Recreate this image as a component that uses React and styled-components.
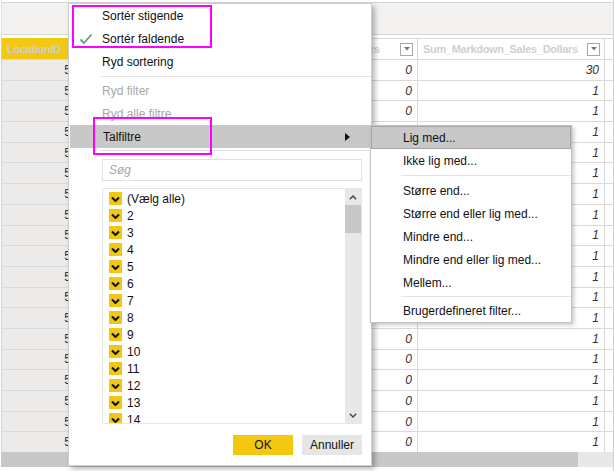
import styled, { createGlobalStyle } from "styled-components";

const GlobalStyle = createGlobalStyle`
  html, body {
    margin: 0;
    padding: 0;
    background: #fff;
  }
  body {
    font-family: "Liberation Sans", Arial, sans-serif;
    color: #000;
  }
`;

const YELLOW = "#f2c811";
const LINE = "#d9d9d9";

// table data --------------------------
const columns = [
  { key: "loc", title: "LocationID", width: "70px" },
  { key: "gm", title: "Sum_GrossMargin_Amount", width: "161px" },
  { key: "reg", title: "Sum_Regular_Sales_Dollars", width: "185px" },
  { key: "mark", title: "Sum_Markdown_Sales_Dollars", width: "187px" },
  { key: "s", title: "Sum_Sales", width: "1fr" },
];

const rows = Array.from({ length: 20 }, (_, i) => ({
  loc: "5",
  gm: "0",
  reg: "0",
  mark: i === 0 ? "30" : "1",
  s: "",
}));

const sortItems = ["Sortér stigende", "Sortér faldende", "Ryd sortering"];
const numberFilters = [
  ["Lig med...", "Ikke lig med..."],
  ["Større end...", "Større end eller lig med...", "Mindre end...", "Mindre end eller lig med...", "Mellem..."],
  ["Brugerdefineret filter..."],
];
const values = ["(Vælg alle)", "2", "3", "4", "5", "6", "7", "8", "9", "10", "11", "12", "13", "14"];

const App = () => {
  return (
    <>
      <GlobalStyle />
      <Frame>
        <TopBar>
          <TopBand />
        </TopBar>

        <TableArea>
          <Grid $cols={columns.map((c) => c.width).join(" ")}>
            {columns.map((col) => (
              <HeaderCell key={col.key} $loc={col.key === "loc"}>
                <HeaderText>{col.title}</HeaderText>
                {col.key !== "loc" && col.key !== "s" && (
                  <DropButton>
                    <svg width="6" height="4" viewBox="0 0 6 4">
                      <path d="M0 0 L6 0 L3 3.5 Z" fill="#777" />
                    </svg>
                  </DropButton>
                )}
              </HeaderCell>
            ))}
            {rows.map((row, i) =>
              columns.map((col) => (
                <Cell key={`${i}-${col.key}`} $loc={col.key === "loc"}>
                  {row[col.key]}
                </Cell>
              ))
            )}
          </Grid>
        </TableArea>

        <HScroll>
          <HThumb />
        </HScroll>

        {/* Filter dropdown ------------------------ */}
        <Menu>
          {sortItems.map((label, i) => (
            <MenuItem key={label}>
              {i === 1 && (
                <CheckMark viewBox="0 0 14 12" width="14" height="12">
                  <path d="M1.5 6.5 L5 10 L12.5 1.5" fill="none" stroke="#5c9c8a" strokeWidth="1.8" />
                </CheckMark>
              )}
              {label}
            </MenuItem>
          ))}
          <Separator />
          <MenuItem $disabled>Ryd filter</MenuItem>
          <MenuItem $disabled>Ryd alle filtre</MenuItem>
          <MenuItem $active>
            Talfiltre
            <SubArrow viewBox="0 0 5 8" width="5" height="8">
              <path d="M0 0 L5 4 L0 8 Z" fill="#111" />
            </SubArrow>
            <SubMenu>
              {numberFilters.map((group, gi) => (
                <SubGroup key={gi}>
                  {gi > 0 && <SubSeparator $tight={gi === 2} />}
                  {group.map((label) => (
                    <SubItem key={label} $active={label === "Lig med..."}>
                      {label}
                    </SubItem>
                  ))}
                </SubGroup>
              ))}
            </SubMenu>
          </MenuItem>
          <Separator $after />

          <Search>Søg</Search>

          <CheckList>
            <CheckItems>
              {values.map((v) => (
                <CheckRow key={v}>
                  <Box>
                    <svg width="9" height="7" viewBox="0 0 9 7">
                      <path d="M1 2.5 L4.5 6 L8 2.5" fill="none" stroke="#111" strokeWidth="2" />
                    </svg>
                  </Box>
                  {v}
                </CheckRow>
              ))}
            </CheckItems>
            <VScroll>
              <Chevron viewBox="0 0 8 5" width="8" height="5">
                <path d="M0.8 4.2 L4 1 L7.2 4.2" fill="none" stroke="#444" strokeWidth="1.4" />
              </Chevron>
              <VThumb />
              <VSpacer />
              <Chevron viewBox="0 0 8 5" width="8" height="5">
                <path d="M0.8 0.8 L4 4 L7.2 0.8" fill="none" stroke="#444" strokeWidth="1.4" />
              </Chevron>
            </VScroll>
          </CheckList>

          <ButtonRow>
            <Button $primary>OK</Button>
            <Button>Annuller</Button>
          </ButtonRow>
        </Menu>

        {/* annotation boxes */}
        <Mark $x={72} $y={5} $w={140} $h={43} />
        <Mark $x={93} $y={117} $w={119} $h={38} />
      </Frame>
    </>
  );
};

export default App;

// styles ------------------------------

const Frame = styled.div`
  position: relative;
  width: 614px;
  height: 471px;
  overflow: hidden;
  box-sizing: border-box;
  padding-left: 1px;
  border-right: 1px solid #d0d0d0;
  display: flex;
  flex-direction: column;
`;

const TopBar = styled.div`
  height: 38px;
  box-sizing: border-box;
  padding-top: 2px;
  border-left: 1px solid #e0e0e0;
`;

const TopBand = styled.div`
  height: 33px;
  box-sizing: border-box;
  background: #f3f2f1;
  border-top: 1px solid #d6d6d6;
  border-bottom: 1px solid #d6d6d6;
`;

const TableArea = styled.div`
  height: 414px;
  overflow: hidden;
  border-left: 1px solid #d0d0d0;
`;

const Grid = styled.div`
  display: grid;
  grid-template-columns: ${(p) => p.$cols};
  grid-template-rows: 22px;
  grid-auto-rows: 20.7px;
`;

const HeaderCell = styled.div`
  display: flex;
  align-items: center;
  gap: 8px;
  padding: 0 4px 0 5px;
  box-sizing: border-box;
  min-width: 0;
  background: ${(p) => (p.$loc ? YELLOW : "#fff")};
  border-right: 1px solid ${LINE};
  border-bottom: 1px solid ${LINE};
  border-top: 1px solid ${(p) => (p.$loc ? YELLOW : LINE)};
`;

const HeaderText = styled.span`
  flex: 1;
  white-space: nowrap;
  overflow: hidden;
  font-size: 11px;
  font-weight: bold;
  letter-spacing: -0.3px;
  color: #cfcfcf;
`;

const DropButton = styled.span`
  width: 13px;
  height: 13px;
  flex: none;
  box-sizing: border-box;
  border: 1px solid #a8a8a8;
  background: #fff;
  display: flex;
  align-items: center;
  justify-content: center;
`;

const Cell = styled.div`
  box-sizing: border-box;
  display: flex;
  align-items: center;
  justify-content: flex-end;
  padding-right: ${(p) => (p.$loc ? "0" : "5px")};
  font-size: 12px;
  font-style: ${(p) => (p.$loc ? "normal" : "italic")};
  color: #333;
  background: ${(p) => (p.$loc ? "#edebe9" : "#fff")};
  border-right: 1px solid ${LINE};
  border-bottom: 1px solid ${LINE};
`;

const HScroll = styled.div`
  height: 15px;
  background: #e8e8e8;
  border-bottom: 1px solid #fff;
  display: flex;
`;

const HThumb = styled.div`
  width: 577px;
  background: #c8c8c8;
`;

const Menu = styled.div`
  position: absolute;
  left: 68px;
  top: 3px;
  width: 304px;
  height: 463px;
  box-sizing: border-box;
  background: #fff;
  border: 1px solid #cdcdcd;
  box-shadow: 3px 3px 5px rgba(0, 0, 0, 0.28);
  display: flex;
  flex-direction: column;
  font-size: 12px;
`;

const MenuItem = styled.div`
  position: relative;
  height: 23px;
  flex: none;
  display: flex;
  align-items: center;
  padding-left: 33px;
  color: ${(p) => (p.$disabled ? "#a6a6a6" : "#111")};
  background: ${(p) => (p.$active ? "#c8c8c8" : "transparent")};
  margin-left: ${(p) => (p.$active ? "1px" : "0")};
`;

const CheckMark = styled.svg`
  position: absolute;
  left: 10px;
  top: 6px;
`;

const SubArrow = styled.svg`
  position: absolute;
  right: 21px;
  top: 8px;
`;

const Separator = styled.div`
  height: 1px;
  flex: none;
  background: #e3e3e3;
  margin: ${(p) => (p.$after ? "2px 0 8px 31px" : "3px 0 2px 31px")};
`;

const SubMenu = styled.div`
  position: absolute;
  left: calc(100% - 1px);
  top: 0;
  width: 202px;
  box-sizing: border-box;
  background: #fff;
  border: 1px solid #c4c4c4;
  box-shadow: 2px 2px 4px rgba(0, 0, 0, 0.22);
  z-index: 2;
`;

const SubGroup = styled.div`
  display: flex;
  flex-direction: column;
`;

const SubItem = styled.div`
  height: 23px;
  display: flex;
  align-items: center;
  padding-left: 32px;
  color: #111;
  background: ${(p) => (p.$active ? "#c8c8c8" : "transparent")};
  box-shadow: ${(p) => (p.$active ? "inset 0 0 0 1px #a4a4a4" : "none")};
`;

const SubSeparator = styled.div`
  height: 1px;
  background: #e3e3e3;
  margin: ${(p) => (p.$tight ? "2px 0 2px 30px" : "3px 0 3px 30px")};
`;

const Search = styled.div`
  height: 22px;
  flex: none;
  box-sizing: border-box;
  margin: 0 9px 0 33px;
  border: 1px solid #e2e2e2;
  padding-left: 6px;
  display: flex;
  align-items: center;
  font-style: italic;
  color: #a6a6a6;
`;

const CheckList = styled.div`
  height: 236px;
  flex: none;
  box-sizing: border-box;
  margin: 7px 9px 0 33px;
  border: 1px solid #e6e6e6;
  display: flex;
`;

const CheckItems = styled.div`
  flex: 1;
  overflow: hidden;
  padding-top: 1px;
`;

const CheckRow = styled.div`
  height: 17px;
  display: flex;
  align-items: center;
  gap: 5px;
  padding-left: 6px;
  color: #111;
`;

const Box = styled.span`
  width: 13px;
  height: 13px;
  background: ${YELLOW};
  display: flex;
  align-items: center;
  justify-content: center;
`;

const VScroll = styled.div`
  width: 16px;
  background: #e8e8e8;
  display: flex;
  flex-direction: column;
  align-items: center;
  padding: 6px 0 5px;
  box-sizing: border-box;
`;

const Chevron = styled.svg`
  flex: none;
`;

const VThumb = styled.div`
  width: 16px;
  height: 28px;
  margin-top: 5px;
  background: #c8c8c8;
`;

const VSpacer = styled.div`
  flex: 1;
`;

const ButtonRow = styled.div`
  display: flex;
  justify-content: flex-end;
  gap: 9px;
  margin-top: 11px;
  padding-right: 9px;
`;

const Button = styled.div`
  width: 60px;
  height: 20px;
  display: flex;
  align-items: center;
  justify-content: center;
  font-size: 12px;
  color: #111;
  background: ${(p) => (p.$primary ? YELLOW : "#e6e6e6")};
`;

const Mark = styled.div`
  position: absolute;
  left: ${(p) => p.$x}px;
  top: ${(p) => p.$y}px;
  width: ${(p) => p.$w}px;
  height: ${(p) => p.$h}px;
  box-sizing: border-box;
  border: 2px solid #ff00ff;
  pointer-events: none;
  z-index: 5;
`;
